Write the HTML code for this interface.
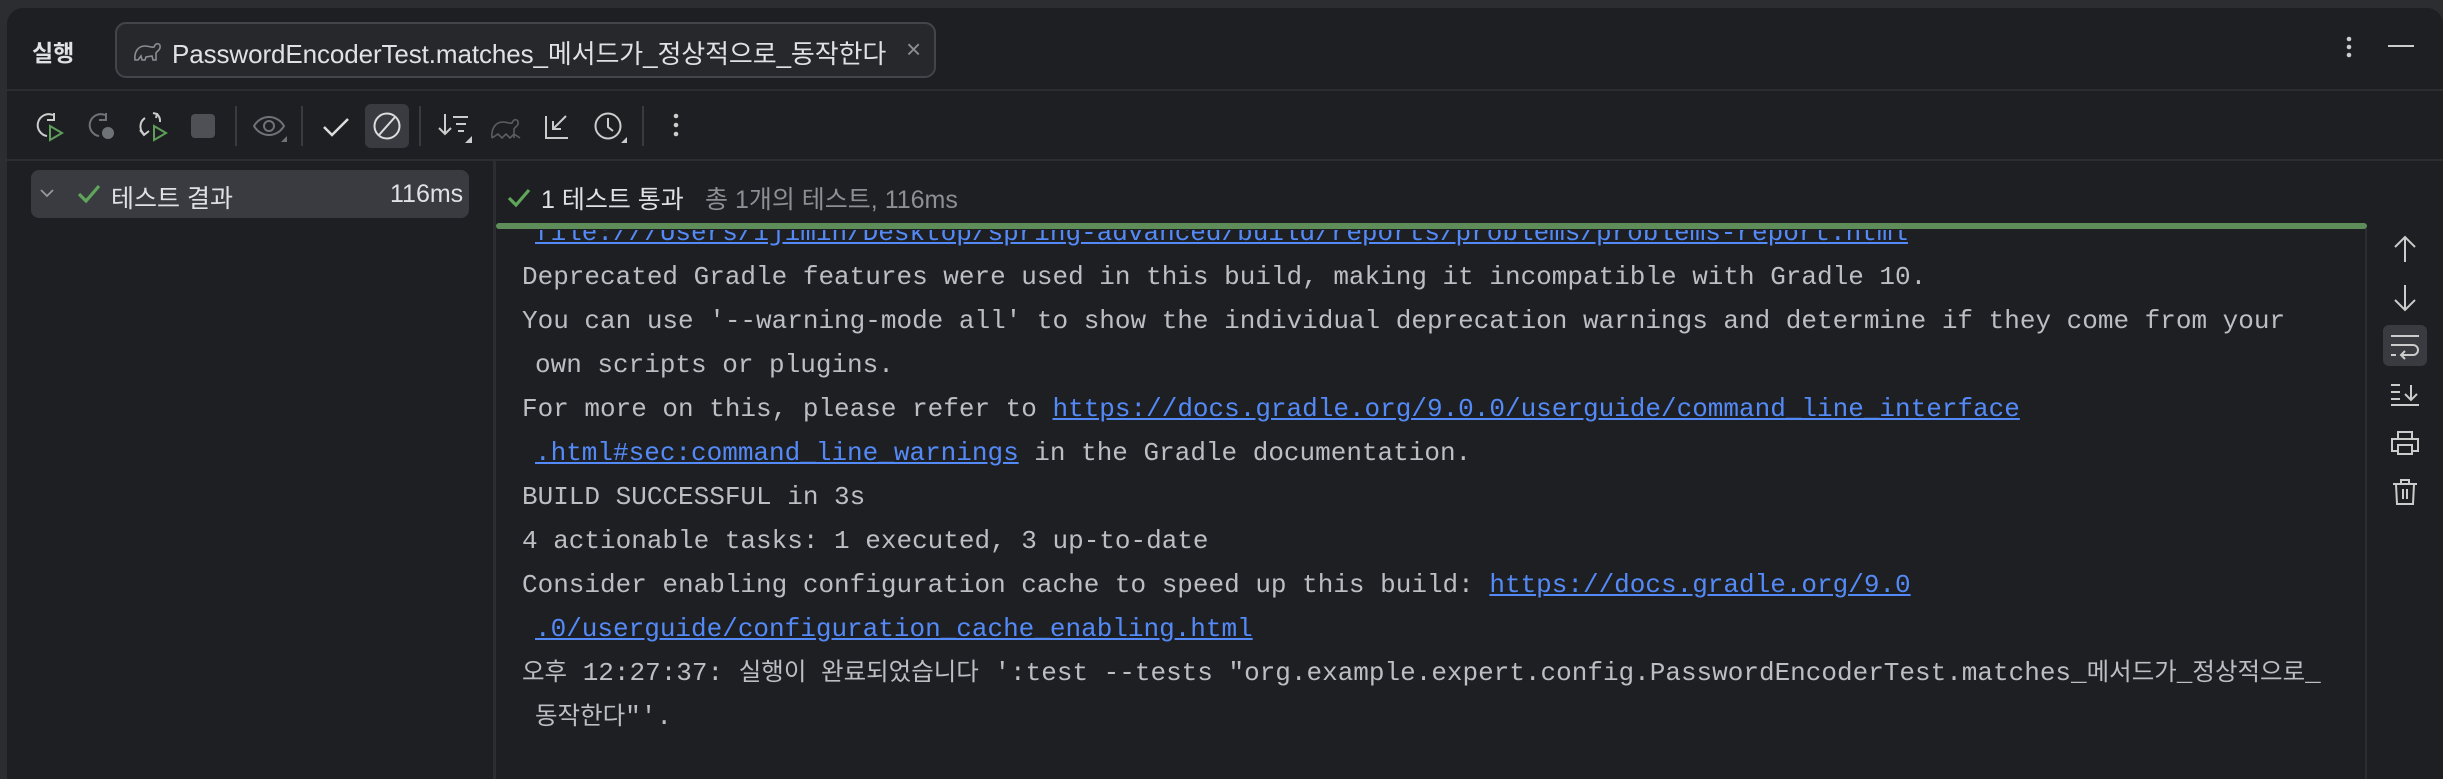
<!DOCTYPE html>
<html><head><meta charset="utf-8"><style>
*{margin:0;padding:0;box-sizing:border-box}
body{width:2443px;height:779px;background:#2b2d30;overflow:hidden;position:relative;font-family:"Liberation Sans","Noto Sans CJK KR",sans-serif;color:#dfe1e5}
.panel{position:absolute;left:7px;top:8px;width:2436px;height:771px;background:#1e1f22;border-radius:16px 16px 0 0}
.abs{position:absolute}
.hline{position:absolute;height:2px;background:#2b2d30}
svg{position:absolute;overflow:visible}
.con{position:absolute;left:497px;top:230px;width:1868px;height:549px;overflow:hidden}
.ln{position:absolute;left:25px;white-space:pre;font-family:"Liberation Mono","Noto Sans CJK KR",monospace;font-size:26px;line-height:44px;color:#bcbec4}
.ln a{color:#548af7;text-decoration:underline}
.k{font-size:24.5px}
</style></head><body>
<div class="panel"></div>
<div class="abs" style="left:32px;top:34px;font-size:23px;font-weight:bold;color:#dfe1e5">실행</div>
<div class="abs" style="left:115px;top:22px;width:821px;height:56px;border:2px solid #43454a;border-radius:11px;background:#26282c"></div>
<svg style="left:132px;top:38px" width="30" height="24" viewBox="0 0 30 24" fill="none" stroke="#8a8d92" stroke-width="1.6"><path d="M3 22 C2 14 6 8 13 8 C18 8 20 10 22 9 C24 4 29 5 28 10 C27 13 25 13 24 15 L24 22 L21 22 L20 18 L14 19 L13 22 L10 22 L9 18 L6 22Z"/></svg>
<div class="abs" style="left:172px;top:34px;font-size:26px;color:#dfe1e5;white-space:nowrap;letter-spacing:-0.1px">PasswordEncoderTest.matches_메서드가_정상적으로_동작한다</div>
<div class="abs" style="left:906px;top:34px;font-size:26px;color:#8a8d92">×</div>
<svg style="left:2344px;top:36px" width="10" height="24"><circle cx="5" cy="3" r="2.3" fill="#ccc"/><circle cx="5" cy="11" r="2.3" fill="#ccc"/><circle cx="5" cy="19" r="2.3" fill="#ccc"/></svg>
<div class="abs" style="left:2388px;top:45px;width:26px;height:2px;background:#ccc"></div>
<div class="hline" style="left:7px;top:89px;width:2436px"></div>
<svg style="left:35px;top:112px" width="30" height="30" fill="none" stroke-width="2"><path d="M18 3 A11 11 0 1 0 12 24" stroke="#ccc"/><path d="M19 1 L19 8 L12 8" stroke="#ccc"/><path d="M15 14 L27 21 L15 28Z" stroke="#5f9e5a"/></svg>
<svg style="left:87px;top:112px" width="30" height="30" fill="none" stroke-width="2"><path d="M18 3 A11 11 0 1 0 12 24" stroke="#6f7277"/><path d="M19 1 L19 8 L12 8" stroke="#6f7277"/><circle cx="21" cy="21" r="6" fill="#6f7277" stroke="none"/></svg>
<svg style="left:139px;top:112px" width="30" height="30" fill="none" stroke-width="2"><path d="M6 6 A10 10 0 0 0 5 22" stroke="#ccc"/><path d="M1 18 L5 23 L10 19" stroke="#ccc"/><path d="M14 1 L18 2 L17 6 M18 2 A10 10 0 0 1 21 10" stroke="#ccc"/><path d="M15 14 L27 21 L15 28Z" stroke="#5f9e5a"/></svg>
<div class="abs" style="left:191px;top:114px;width:24px;height:24px;background:#4e5055;border-radius:4px"></div>
<div class="abs" style="left:235px;top:106px;width:2px;height:40px;background:#393b40"></div>
<svg style="left:253px;top:114px" width="34" height="30" fill="none" stroke="#6f7277" stroke-width="2"><path d="M1 12 C8 0 24 0 31 12 C24 24 8 24 1 12Z"/><circle cx="16" cy="12" r="5"/><path d="M28 28 L34 22 L34 28Z" fill="#6f7277" stroke="none"/></svg>
<div class="abs" style="left:301px;top:106px;width:2px;height:40px;background:#393b40"></div>
<svg style="left:322px;top:116px" width="28" height="22" fill="none" stroke="#ddd" stroke-width="2.5"><path d="M2 11 L10 19 L26 3"/></svg>
<div class="abs" style="left:365px;top:104px;width:44px;height:44px;background:#393b40;border-radius:6px"></div>
<svg style="left:373px;top:112px" width="28" height="28" fill="none" stroke="#ddd" stroke-width="2"><circle cx="14" cy="14" r="12.5"/><path d="M22 5 L6 23"/></svg>
<div class="abs" style="left:419px;top:106px;width:2px;height:40px;background:#393b40"></div>
<svg style="left:438px;top:114px" width="34" height="30" fill="none" stroke="#ccc" stroke-width="2"><path d="M7 0 L7 20 M1 14 L7 20 L13 14 M15 3 L30 3 M18 10 L28 10 M20 17 L26 17"/><path d="M27 29 L34 22 L34 29Z" fill="#ccc" stroke="none"/></svg>
<svg style="left:490px;top:114px" width="32" height="26" fill="none" stroke="#5a5d62" stroke-width="1.6"><path d="M2 24 C1 14 6 8 13 8 C18 8 20 10 22 9 C24 4 29 5 28 10 C27 13 25 13 24 15 L24 24 M2 24 L8 20 L12 24 L16 20 L20 24 L24 20 L30 24"/></svg>
<svg style="left:544px;top:114px" width="26" height="26" fill="none" stroke="#ccc" stroke-width="2"><path d="M2 2 L2 24 L24 24 M22 2 L9 15 M9 7 L9 15 L17 15"/></svg>
<svg style="left:594px;top:112px" width="34" height="32" fill="none" stroke="#ccc" stroke-width="2"><circle cx="14" cy="14" r="12.5"/><path d="M14 6 L14 15 L19 19"/><path d="M27 31 L33 25 L33 31Z" fill="#ccc" stroke="none"/></svg>
<div class="abs" style="left:642px;top:106px;width:2px;height:40px;background:#393b40"></div>
<svg style="left:671px;top:113px" width="10" height="24"><circle cx="5" cy="3" r="2.3" fill="#ccc"/><circle cx="5" cy="12" r="2.3" fill="#ccc"/><circle cx="5" cy="21" r="2.3" fill="#ccc"/></svg>
<div class="hline" style="left:7px;top:159px;width:2436px"></div>
<div class="abs" style="left:31px;top:170px;width:438px;height:48px;background:#393b40;border-radius:8px"></div>
<svg style="left:40px;top:189px" width="14" height="9" fill="none" stroke="#999" stroke-width="1.8"><path d="M1 1 L7 7 L13 1"/></svg>
<svg style="left:77px;top:184px" width="24" height="20" fill="none" stroke="#5fa55a" stroke-width="3.2"><path d="M2 10 L9 17 L22 2"/></svg>
<div class="abs" style="left:111px;top:179px;font-size:25px;color:#dfe1e5">테스트 결과</div>
<div class="abs" style="left:390px;top:180px;font-size:25px;color:#dfe1e5">116ms</div>
<div class="abs" style="left:493px;top:161px;width:3px;height:618px;background:#2b2d30"></div>
<svg style="left:507px;top:188px" width="24" height="20" fill="none" stroke="#5fa55a" stroke-width="3.2"><path d="M2 10 L9 17 L22 2"/></svg>
<div class="abs" style="left:541px;top:180px;font-size:25px;color:#dfe1e5;white-space:nowrap">1 테스트 통과</div>
<div class="abs" style="left:705px;top:180px;font-size:25px;color:#8c8f94;white-space:nowrap">총 1개의 테스트, 116ms</div>
<div class="abs" style="left:496px;top:223px;width:1871px;height:6px;background:#5f8d5a;border-radius:3px"></div>
<div class="abs" style="left:2365px;top:229px;width:2px;height:550px;background:#2b2d30"></div>
<div class="con">
<div class="ln" style="top:-19px;left:38px"><a>file:///Users/ijimin/Desktop/spring-advanced/build/reports/problems/problems-report.html</a></div>
<div class="ln" style="top:25px">Deprecated Gradle features were used in this build, making it incompatible with Gradle 10.</div>
<div class="ln" style="top:69px">You can use '--warning-mode all' to show the individual deprecation warnings and determine if they come from your</div>
<div class="ln" style="top:113px;left:38px">own scripts or plugins.</div>
<div class="ln" style="top:157px">For more on this, please refer to <a>https://docs.gradle.org/9.0.0/userguide/command_line_interface</a></div>
<div class="ln" style="top:201px;left:38px"><a>.html#sec:command_line_warnings</a> in the Gradle documentation.</div>
<div class="ln" style="top:245px">BUILD SUCCESSFUL in 3s</div>
<div class="ln" style="top:289px">4 actionable tasks: 1 executed, 3 up-to-date</div>
<div class="ln" style="top:333px">Consider enabling configuration cache to speed up this build: <a>https://docs.gradle.org/9.0</a></div>
<div class="ln" style="top:377px;left:38px"><a>.0/userguide/configuration_cache_enabling.html</a></div>
<div class="ln" style="top:421px"><span class="k">오후</span> 12:27:37: <span class="k">실행이 완료되었습니다</span> ':test --tests "org.example.expert.config.PasswordEncoderTest.matches_<span class="k">메서드가</span>_<span class="k">정상적으로</span>_</div>
<div class="ln" style="top:465px;left:38px"><span class="k">동작한다</span>"'.</div>
</div>
<svg style="left:2392px;top:236px" width="26" height="26" fill="none" stroke="#ccc" stroke-width="2"><path d="M13 1 L13 26 M3 11 L13 1 L23 11"/></svg>
<svg style="left:2392px;top:285px" width="26" height="26" fill="none" stroke="#ccc" stroke-width="2"><path d="M13 0 L13 25 M3 15 L13 25 L23 15"/></svg>
<div class="abs" style="left:2383px;top:325px;width:44px;height:41px;background:#393b40;border-radius:6px"></div>
<svg style="left:2391px;top:335px" width="28" height="24" fill="none" stroke="#ccc" stroke-width="2"><path d="M0 1 L28 1 M0 10 L22 10 A5 5 0 0 1 22 20 L10 20 M14 16 L10 20 L14 24 M0 20 L5 20"/></svg>
<svg style="left:2391px;top:384px" width="28" height="22" fill="none" stroke="#ccc" stroke-width="2"><path d="M0 1 L9 1 M0 8 L9 8 M0 15 L9 15 M0 21 L28 21 M20 1 L20 16 M14 10 L20 16 L26 10"/></svg>
<svg style="left:2391px;top:431px" width="28" height="24" fill="none" stroke="#ccc" stroke-width="2"><path d="M7 7 L7 1 L21 1 L21 7 M6 20 L1 20 L1 8 L27 8 L27 20 L22 20 M7 14 L21 14 L21 23 L7 23Z"/></svg>
<svg style="left:2393px;top:479px" width="24" height="26" fill="none" stroke="#ccc" stroke-width="2"><path d="M0 5 L24 5 M8 5 L8 1 L16 1 L16 5 M3 5 L4 25 L20 25 L21 5 M10 10 L10 20 M14 10 L14 20"/></svg>
</body></html>
